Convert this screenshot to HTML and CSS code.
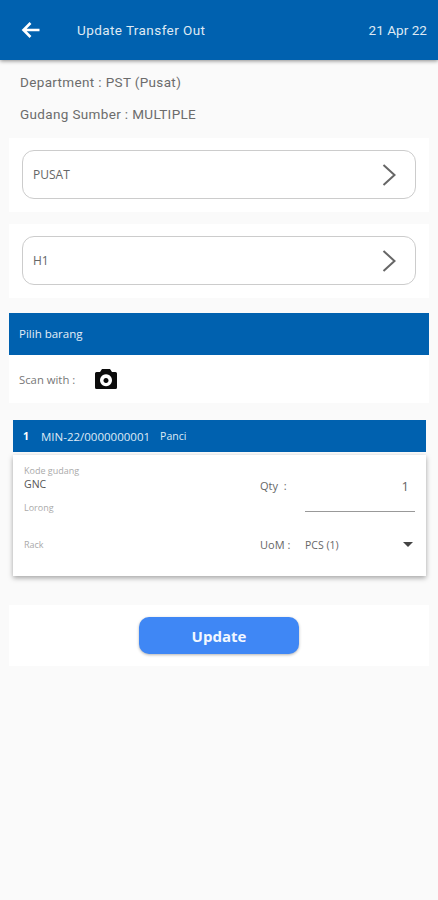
FILE: index.html
```html
<!DOCTYPE html>
<html lang="en">
<head>
    <meta charset="UTF-8">
    <title>Update Transfer Out</title>
    <link rel="stylesheet" href="styles.css">
</head>
<body>
<div class="header">
    <svg class="back" width="20" height="18" viewBox="0 0 20 18"><path d="M18.500 9H3M9.500 2L2.500 9l7 7" fill="none" stroke="#fff" stroke-width="2.600"/></svg>
    <span class="title">Update Transfer Out</span>
    <span class="date">21 Apr 22</span>
</div>
<div class="info">
    <p>Department : PST (Pusat)</p>
    <p>Gudang Sumber : MULTIPLE</p>
</div>
<div class="card picker">
    <div class="select">
        <span>PUSAT</span>
        <svg width="16" height="24" viewBox="0 0 16 24"><path d="M2.500 2l11 10-11 10" fill="none" stroke="#666" stroke-width="2"/></svg>
    </div>
</div>
<div class="card picker">
    <div class="select">
        <span>H1</span>
        <svg width="16" height="24" viewBox="0 0 16 24"><path d="M2.500 2l11 10-11 10" fill="none" stroke="#666" stroke-width="2"/></svg>
    </div>
</div>
<div class="section-bar">Pilih barang</div>
<div class="scan">
    <span>Scan with :</span>
    <svg width="22" height="20" viewBox="0 0 22 20"><path fill="#0c0c0c" fill-rule="evenodd" d="M7 0h8l2 3h3.500q1.500 0 1.500 1.500v14q0 1.500-1.500 1.500h-19q-1.500 0-1.500-1.500v-14q0-1.500 1.500-1.500h3.500zM11 5.200a6 6 0 1 0 .01 0zM11 9a2.500 2.500 0 1 1-.01 0z"/></svg>
</div>
<div class="item-bar">
    <b>1</b>
    <span class="item-code">MIN-22/0000000001</span>
    <span>Panci</span>
</div>
<div class="item-body">
    <div class="item-left">
        <div class="label">Kode gudang</div>
        <div class="value">GNC</div>
        <div class="label lorong">Lorong</div>
        <div class="label rack">Rack</div>
    </div>
    <div class="item-right">
        <div class="qty-row">
            <span class="field-name">Qty &nbsp;:</span>
            <span class="qty-input">1</span>
        </div>
        <div class="uom-row">
            <span class="field-name">UoM :</span>
            <span class="uom-value">PCS (1)</span>
            <span class="caret"></span>
        </div>
    </div>
</div>
<div class="card action">
    <button class="update">Update</button>
</div>
</body>
</html>
```

FILE: styles.css
```css
* {
    padding: 0;
    margin: 0;
    box-sizing: border-box;
}

body {
    width: 438px;
    height: 900px;
    background: #fafafa;
    font-family: "Open Sans", "Noto Sans", sans-serif;
    color: #555;
    overflow: hidden;
}

.header {
    height: 60px;
    background: #0061af;
    box-shadow: 0 1px 4px rgba(0, 0, 0, 0.45);
    display: flex;
    align-items: center;
    padding: 0 11px 0 21px;
    color: #dfe9f3;
    font-family: Roboto, sans-serif;
    font-size: 13.5px;
}

.title {
    margin-left: 36px;
    flex: 1;
    letter-spacing: 0.42px;
}

.date {
    letter-spacing: 0.05px;
}

.info {
    padding: 14px 20px 0;
    font-family: Roboto, sans-serif;
    font-size: 13.5px;
    letter-spacing: 0.35px;
    color: #6c6c6c;
    height: 78px;
}

.info p {
    height: 32px;
    line-height: 17px;
}

.card {
    background: #fff;
    width: 420px;
    margin-left: 9px;
}

.picker {
    height: 74px;
    margin-bottom: 12px;
    padding: 12px 13px 0 13px;
}

.select {
    height: 49px;
    border: 1px solid #ccc;
    border-radius: 12px;
    display: flex;
    align-items: center;
    justify-content: space-between;
    padding: 0 18px 0 10px;
    font-size: 12px;
    color: #666;
}

.section-bar {
    width: 420px;
    height: 42px;
    margin: 15px 0 0 9px;
    background: #0061af;
    color: #e4eef7;
    font-size: 11.5px;
    line-height: 42px;
    padding-left: 10px;
}

.scan {
    width: 420px;
    height: 48px;
    margin-left: 9px;
    background: #fff;
    display: flex;
    align-items: center;
    gap: 20px;
    padding-left: 10px;
    font-size: 11.3px;
    color: #777;
}

.item-bar {
    width: 413px;
    height: 32px;
    margin: 17px 0 0 13px;
    background: #0061af;
    color: #dfeaf5;
    font-size: 10.5px;
    display: flex;
    align-items: center;
    padding-left: 10px;
}

.item-bar b {
    color: #fff;
    margin-right: 12px;
}

.item-bar .item-code {
    font-size: 11.5px;
    margin-right: 10px;
}

.item-body {
    width: 413px;
    height: 121px;
    margin: 3px 0 0 13px;
    background: #fff;
    box-shadow: 0 2px 5px rgba(0, 0, 0, 0.35);
    display: flex;
}

.item-left {
    width: 247px;
    padding: 9px 0 0 11px;
}

.label {
    font-size: 9px;
    line-height: 13px;
    color: #aaa;
}

.value {
    font-size: 10.5px;
    line-height: 14px;
    color: #555;
}

.lorong {
    margin-top: 10px;
}

.rack {
    margin-top: 24px;
}

.item-right {
    flex: 1;
    padding-right: 11px;
}

.qty-row {
    display: flex;
    height: 57px;
    padding-top: 20px;
}

.field-name {
    width: 45px;
    font-size: 11px;
    line-height: 22px;
    color: #666;
}

.qty-input {
    flex: 1;
    height: 37px;
    border-bottom: 1px solid #999;
    text-align: right;
    padding-right: 6px;
    font-size: 13px;
    line-height: 22px;
    color: #666;
}

.uom-row {
    display: flex;
    align-items: center;
    height: 22px;
    margin-top: 22px;
}

.uom-value {
    flex: 1;
    font-size: 10.5px;
    color: #666;
}

.caret {
    width: 0;
    height: 0;
    border-left: 5.5px solid transparent;
    border-right: 5.5px solid transparent;
    border-top: 5px solid #444;
    margin-right: 2px;
    margin-top: -2px;
}

.action {
    height: 61px;
    margin-top: 29px;
    padding-top: 12px;
    display: flex;
    justify-content: center;
}

.update {
    width: 160px;
    height: 37px;
    background: #3f87f5;
    border: 0;
    border-radius: 10px;
    box-shadow: 0 1px 3px rgba(0, 0, 0, 0.3);
    color: #f2f7ff;
    font-family: "Open Sans", "Noto Sans", sans-serif;
    font-size: 15px;
    font-weight: bold;
}
```
